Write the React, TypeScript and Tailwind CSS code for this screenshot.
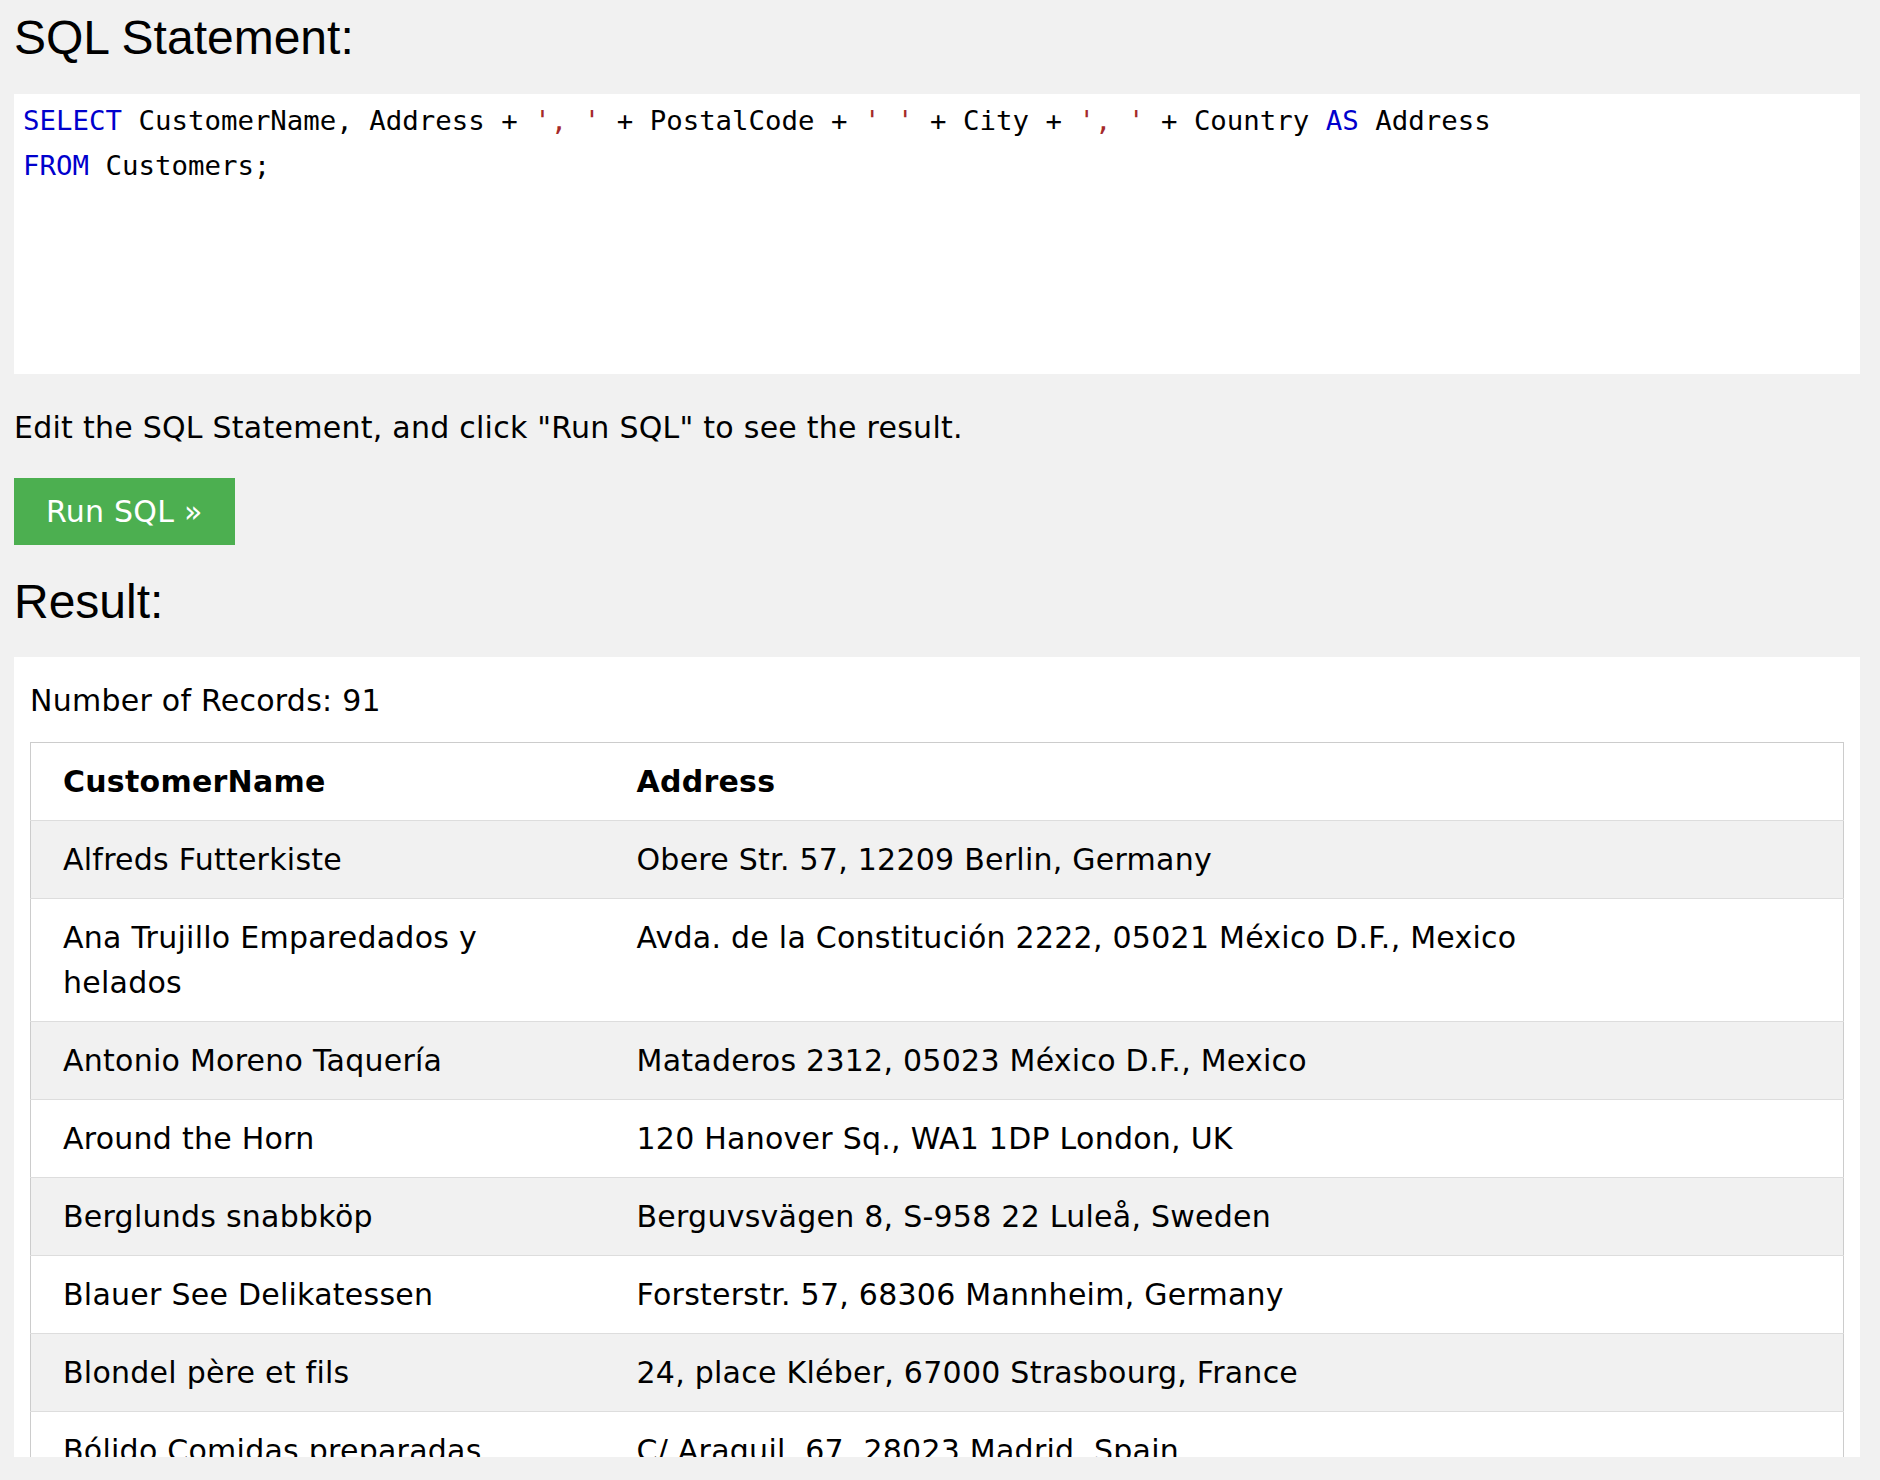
import React from "react";

type Row = { name: string; address: string };

const ROWS: Row[] = [
  { name: "Alfreds Futterkiste", address: "Obere Str. 57, 12209 Berlin, Germany" },
  { name: "Ana Trujillo Emparedados y helados", address: "Avda. de la Constitución 2222, 05021 México D.F., Mexico" },
  { name: "Antonio Moreno Taquería", address: "Mataderos 2312, 05023 México D.F., Mexico" },
  { name: "Around the Horn", address: "120 Hanover Sq., WA1 1DP London, UK" },
  { name: "Berglunds snabbköp", address: "Berguvsvägen 8, S-958 22 Luleå, Sweden" },
  { name: "Blauer See Delikatessen", address: "Forsterstr. 57, 68306 Mannheim, Germany" },
  { name: "Blondel père et fils", address: "24, place Kléber, 67000 Strasbourg, France" },
  { name: "Bólido Comidas preparadas", address: "C/ Araquil, 67, 28023 Madrid, Spain" },
];

const Kw = ({ children }: { children: React.ReactNode }) => (
  <span className="text-[#0000cd]">{children}</span>
);
const Str = ({ children }: { children: React.ReactNode }) => (
  <span className="text-[#a52a2a]">{children}</span>
);

export default function App() {
  return (
    <div className="min-h-[1480px] bg-[#f1f1f1] pl-[14px] pr-[20px] pt-[10px] font-['DejaVu_Sans',Verdana,sans-serif] text-[30px] leading-[45px] tracking-[0.25px] text-black">
      <h2 className="font-['Liberation_Sans',Arial,sans-serif] text-[48px] leading-[56px] tracking-normal">
        SQL Statement:
      </h2>

      <div className="mt-[28px] h-[280px] bg-white pl-[9px] pt-[4px] font-['DejaVu_Sans_Mono',monospace] text-[27.4px] leading-[45px] tracking-normal whitespace-pre">
        <div>
          <Kw>SELECT</Kw> CustomerName, Address + <Str>', '</Str> + PostalCode + <Str>' '</Str> + City + <Str>', '</Str> + Country <Kw>AS</Kw> Address
        </div>
        <div>
          <Kw>FROM</Kw> Customers;
        </div>
      </div>

      <p className="mt-[31px]">Edit the SQL Statement, and click "Run SQL" to see the result.</p>

      <button
        type="button"
        className="mt-[28px] block bg-[#4caf50] px-[32px] py-[11px] text-white"
      >
        Run SQL »
      </button>

      <h2 className="mt-[29px] font-['Liberation_Sans',Arial,sans-serif] text-[48px] leading-[56px] tracking-normal">
        Result:
      </h2>

      {/* result pane is clipped at the bottom, like the scrolled frame in the screenshot */}
      <div className="mt-[27px] h-[800px] overflow-hidden bg-white px-[16px] pt-[21px]">
        <div>Number of Records: 91</div>
        <table className="mt-[19px] w-full table-fixed border-collapse border border-[#ccc]">
          <colgroup>
            <col className="w-[590px]" />
            <col />
          </colgroup>
          <thead>
            <tr className="border-b border-[#ddd] bg-white">
              <th className="py-[16px] pl-[32px] pr-[16px] text-left font-bold">CustomerName</th>
              <th className="px-[16px] py-[16px] text-left font-bold">Address</th>
            </tr>
          </thead>
          <tbody>
            {ROWS.map((r, i) => (
              <tr
                key={r.name}
                className={i % 2 === 0 ? "border-b border-[#ddd] bg-[#f1f1f1]" : "border-b border-[#ddd] bg-white"}
              >
                <td className="py-[16px] pl-[32px] pr-[70px] align-top">{r.name}</td>
                <td className="px-[16px] py-[16px] align-top">{r.address}</td>
              </tr>
            ))}
          </tbody>
        </table>
      </div>
    </div>
  );
}
